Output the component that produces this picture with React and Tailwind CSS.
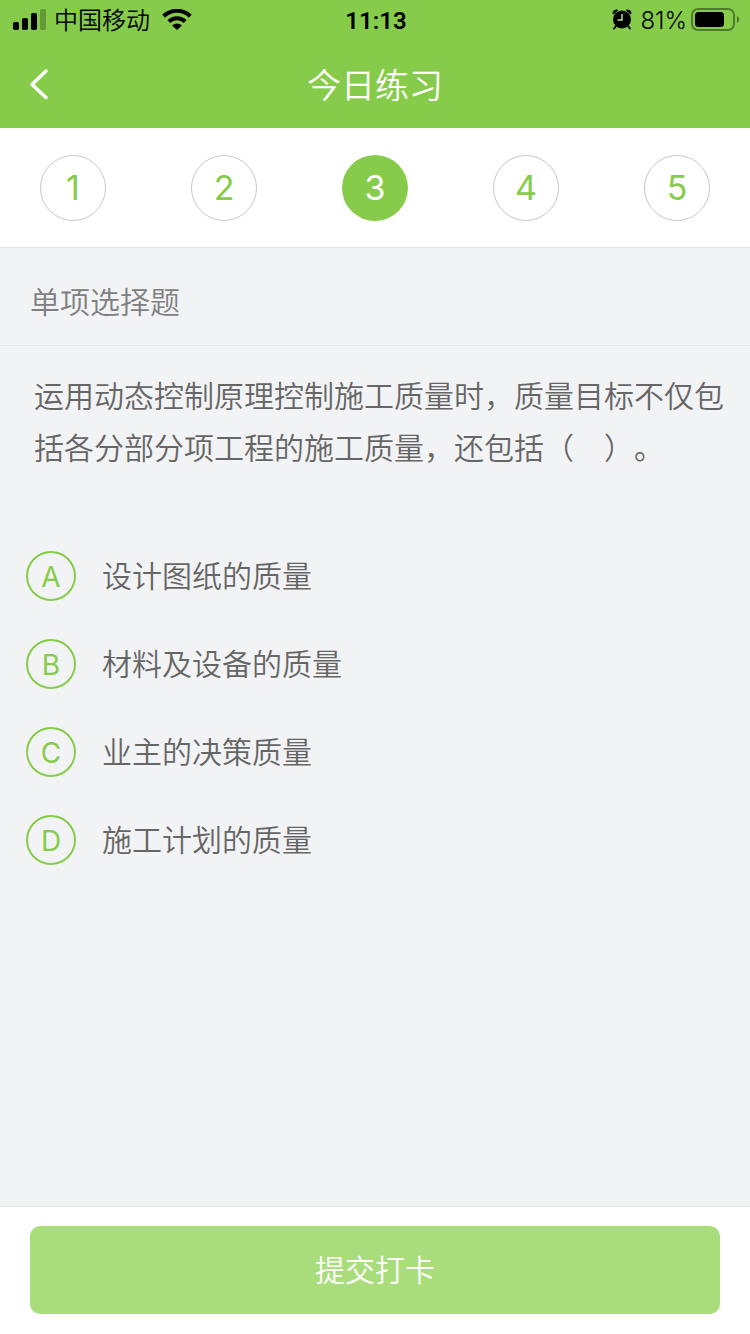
import React, { useState } from 'react';

const STEPS = [1, 2, 3, 4, 5];

const OPTIONS = [
  { key: 'A', text: '设计图纸的质量' },
  { key: 'B', text: '材料及设备的质量' },
  { key: 'C', text: '业主的决策质量' },
  { key: 'D', text: '施工计划的质量' },
];

const SignalIcon = () => (
  <svg width="34" height="22" viewBox="0 0 34 22">
    <rect x="1" y="13" width="6" height="8" rx="1.8" />
    <rect x="10" y="9" width="6" height="12" rx="1.8" />
    <rect x="19" y="4" width="6" height="17" rx="1.8" />
    <rect x="28" y="0" width="6" height="21" rx="1.8" opacity="0.25" />
  </svg>
);

const WifiIcon = () => (
  <svg width="30" height="22" viewBox="0 0 30 22">
    <g fill="none" stroke="#000" strokeWidth="4">
      <path d="M1.7 7.2a19 19 0 0 1 26.6 0" />
      <path d="M6.8 12.500a11.8 11.8 0 0 1 16.400 0" />
    </g>
    <path d="M15 21l-4.900-4.500a7 7 0 0 1 9.800 0z" />
  </svg>
);

const AlarmIcon = () => (
  <svg width="20" height="22" viewBox="0 0 20 22">
    <circle cx="10" cy="10.5" r="9" />
    <path d="M.5 4.5C.5 1.500 3 0 5.500.5L6 1.500L1.500 5.500zM19.500 4.500C19.500 1.500 17 0 14.500.5L14 1.500L18.500 5.500z" />
    <path d="M4 17l-2 2.500M16 17l2 2.500" stroke="#000" strokeWidth="2" strokeLinecap="round" />
    <path d="M10 5.500V11H6" fill="none" stroke="#b4e08c" strokeWidth="1.500" strokeLinecap="round" />
  </svg>
);

const BatteryIcon = () => (
  <svg width="49" height="24" viewBox="0 0 49 24">
    <rect x="1" y="1" width="42" height="21" rx="6" fill="none" stroke="#000" strokeOpacity="0.4" strokeWidth="2" />
    <rect x="4" y="4" width="29" height="15" rx="3.500" />
    <path d="M46 8v7a4 4 0 0 0 0-7z" opacity="0.45" />
  </svg>
);

const StatusBar = () => (
  <div className="grid h-10 grid-cols-3 items-center pl-3 pr-[10px] text-2xl text-black">
    <div className="flex items-center">
      <SignalIcon />
      <span className="ml-2 mr-3 whitespace-nowrap pt-0.5 font-[350]">中国移动</span>
      <WifiIcon />
    </div>
    <span className="pt-0.5 text-center font-[Roboto,sans-serif] font-semibold">11:13</span>
    <div className="flex items-center justify-end gap-1">
      <AlarmIcon />
      <span className="ml-1 pt-0.5">81%</span>
      <BatteryIcon />
    </div>
  </div>
);

export default function App() {
  const [step, setStep] = useState(3);
  const [answer, setAnswer] = useState('');

  return (
    <div className="flex min-h-screen flex-col bg-[#f2f3f5] font-[Inter,'Noto_Sans_CJK_SC',sans-serif] font-[350] text-[#666666] [text-spacing-trim:space-all]">
      <header className="bg-[#86cc4a]">
        <StatusBar />
        <div className="grid h-[88px] grid-cols-[80px_1fr_80px] items-center text-white">
          <button type="button" aria-label="返回" className="flex h-full items-center pl-7">
            <svg width="22" height="32" viewBox="0 0 22 32" fill="none" stroke="currentColor" strokeWidth="3.500" strokeLinecap="round" strokeLinejoin="round">
              <path d="M18 3L4 16.500L18 29.500" />
            </svg>
          </button>
          <h1 className="pt-0.5 text-center text-[34px] font-[350]">今日练习</h1>
        </div>
      </header>

      <nav className="flex h-[120px] items-center justify-between border-b border-[#e4e4e4] bg-white px-10">
        {STEPS.map(n => (
          <button
            key={n}
            type="button"
            onClick={() => setStep(n)}
            className={`size-[66px] rounded-full text-[34px] font-normal ${n === step ? 'bg-[#86cc4a] text-white' : 'border border-[#c8c8c8] text-[#86cc4a]'}`}
          >
            {n}
          </button>
        ))}
      </nav>

      <h2 className="flex h-[98px] items-center border-b border-[#e6e8ea] px-[30px] pt-3 text-[30px] font-[350] text-[#808080]">
        单项选择题
      </h2>

      <main className="flex-1">
        <p className="pb-[77px] pl-[34px] pr-5 pt-6 text-[30px] leading-[52px]">
          运用动态控制原理控制施工质量时，质量目标不仅包括各分部分项工程的施工质量，还包括（　）。
        </p>
        <div role="radiogroup" aria-label="单项选择题" className="flex flex-col gap-[38px] px-[26px]">
          {OPTIONS.map(o => (
            <label key={o.key} className="flex items-center gap-[26px] text-[30px] leading-[50px]">
              <span className="grid size-[50px] place-items-center">
                <input
                  type="radio"
                  name="answer"
                  value={o.key}
                  checked={answer === o.key}
                  onChange={() => setAnswer(o.key)}
                  className="peer col-start-1 row-start-1 size-[50px] appearance-none rounded-full border-2 border-[#86cc4a] checked:bg-[#86cc4a]"
                />
                <span className="col-start-1 row-start-1 pt-0.5 text-[28px] font-normal leading-none text-[#86cc4a] peer-checked:text-white">{o.key}</span>
              </span>
              {o.text}
            </label>
          ))}
        </div>
      </main>

      <footer className="border-t border-[#e6e8ea] bg-white px-[30px] pb-5 pt-[19px]">
        <button type="button" className="h-[88px] w-full rounded-[10px] bg-[#a9dc7a] text-[30px] font-[350] text-white">
          提交打卡
        </button>
      </footer>
    </div>
  );
}
